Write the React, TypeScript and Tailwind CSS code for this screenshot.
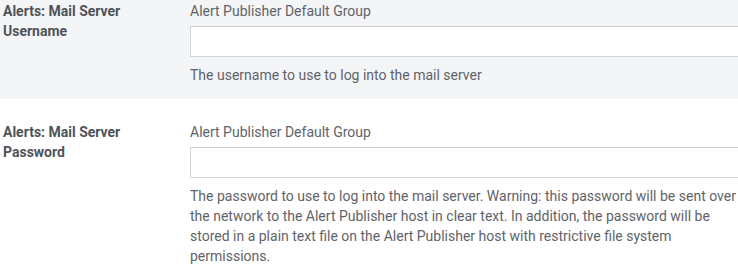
const fields = [
  {
    label: 'Alerts: Mail Server Username',
    group: 'Alert Publisher Default Group',
    help: 'The username to use to log into the mail server',
    shaded: true,
  },
  {
    label: 'Alerts: Mail Server Password',
    group: 'Alert Publisher Default Group',
    help: 'The password to use to log into the mail server. Warning: this password will be sent over the network to the Alert Publisher host in clear text. In addition, the password will be stored in a plain text file on the Alert Publisher host with restrictive file system permissions.',
    shaded: false,
  },
];

export default function App() {
  return (
    <div className="w-full h-[267px] overflow-hidden bg-white font-['Roboto','Liberation_Sans',sans-serif] text-[14px] leading-5">
      {fields.map((f, i) => (
        <div
          key={f.label}
          className={
            f.shaded
              ? 'flex bg-[#f4f5f7] pt-[1px] pb-[14px]'
              : 'flex bg-white pt-[23px] pb-4'
          }
        >
          <div className="w-[150px] shrink-0 pl-[3px] font-bold text-[#4f5358]">{f.label}</div>
          <div className="ml-[40px] flex w-[560px] shrink-0 flex-col text-[#5f6369]">
            <div>{f.group}</div>
            <input
              type={i === 1 ? 'password' : 'text'}
              className="mt-[5px] h-[31px] w-full border border-[#d3d6d9] border-t-[#c9cccf] bg-white px-2 outline-none"
            />
            <p className="mt-2 w-[550px]">{f.help}</p>
          </div>
        </div>
      ))}
    </div>
  );
}
